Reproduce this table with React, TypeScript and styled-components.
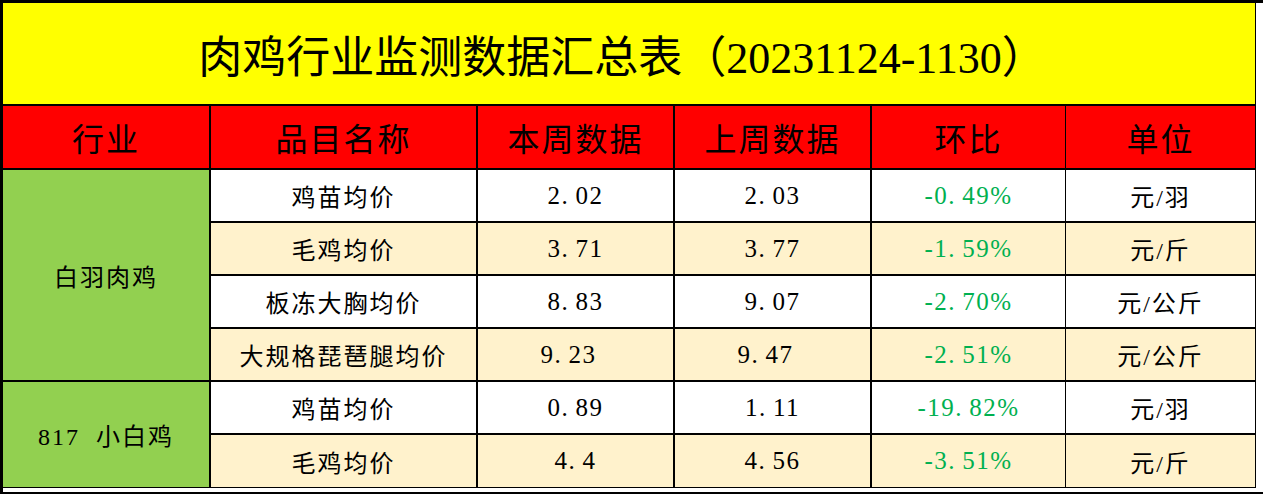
import React from 'react';
import styled, { createGlobalStyle } from 'styled-components';

const GlobalStyle = createGlobalStyle`
  html, body {
    margin: 0;
    padding: 0;
    background: #fff;
  }
  body {
    font-family: "Liberation Serif", "Noto Sans CJK SC", serif;
    color: #000;
  }
`;

const Frame = styled.div`
  box-sizing: border-box;
  width: 1263px;
  height: 494px;
  border-top: 3px solid #000;
  border-left: 3px solid #000;
  border-bottom: 2px solid #000;
  background: #fff;
`;

const Sheet = styled.div`
  display: grid;
  width: 1253px;
  box-sizing: border-box;
  grid-template-columns: 206px 265px 195px 195px 193px 188px;
  grid-template-rows: 101px 62px repeat(5, 51px) 52px;
  gap: 2px;
  padding: 0 1px 1px 0;
  background: #000;
`;

const Title = styled.div`
  grid-column: 1 / -1;
  display: flex;
  align-items: center;
  justify-content: center;
  padding-right: 14px;
  background: #ffff00;
  font-size: 44px;
  white-space: nowrap;
`;

const HeadCell = styled.div<{ $last?: boolean }>`
  display: flex;
  align-items: center;
  justify-content: center;
  margin-left: ${p => (p.$last ? '-1px' : '0')};
  background: #ff0000;
  font-size: 32px;
  letter-spacing: 2px;
`;

const GroupCell = styled.div<{ $span: number }>`
  grid-row: span ${p => p.$span};
  display: flex;
  align-items: center;
  justify-content: center;
  background: #92d050;
  font-size: 24px;
  letter-spacing: 2px;
  white-space: pre;
`;

const Cell = styled.div<{ $alt: boolean; $shift?: boolean; $green?: boolean; $last?: boolean }>`
  display: flex;
  align-items: center;
  justify-content: center;
  margin-left: ${p => (p.$last ? '-1px' : '0')};
  padding-right: ${p => (p.$shift ? '14px' : '0')};
  background: ${p => (p.$alt ? '#fff2cc' : '#ffffff')};
  color: ${p => (p.$green ? '#00b050' : '#000')};
  font-size: 24px;
  letter-spacing: 2px;
  white-space: nowrap;
`;

const Digits = styled.span`
  font-size: 25px;
  letter-spacing: 1.5px;
`;

const Dot = styled.span`
  display: inline-block;
  width: 14px;
`;

const Num: React.FC<{ value: string }> = ({ value }) => {
  const [head, tail] = value.split('.');
  if (tail === undefined) return <Digits>{value}</Digits>;
  return (
    <Digits>
      {head}
      <Dot>.</Dot>
      {tail}
    </Digits>
  );
};

interface Row {
  name: string;
  cur: string;
  prev: string;
  ratio: string;
  unit: string;
}

const groups: { label: string; rows: Row[] }[] = [
  {
    label: '白羽肉鸡',
    rows: [
      { name: '鸡苗均价', cur: '2.02', prev: '2.03', ratio: '-0.49%', unit: '元/羽' },
      { name: '毛鸡均价', cur: '3.71', prev: '3.77', ratio: '-1.59%', unit: '元/斤' },
      { name: '板冻大胸均价', cur: '8.83', prev: '9.07', ratio: '-2.70%', unit: '元/公斤' },
      { name: '大规格琵琶腿均价', cur: '9.23', prev: '9.47', ratio: '-2.51%', unit: '元/公斤' },
    ],
  },
  {
    label: '817\u00a0\u00a0小白鸡',
    rows: [
      { name: '鸡苗均价', cur: '0.89', prev: '1.11', ratio: '-19.82%', unit: '元/羽' },
      { name: '毛鸡均价', cur: '4.4', prev: '4.56', ratio: '-3.51%', unit: '元/斤' },
    ],
  },
];

const headers = ['行业', '品目名称', '本周数据', '上周数据', '环比', '单位'];

export default function App() {
  let index = 0;
  return (
    <>
      <GlobalStyle />
      <Frame>
        <Sheet>
          <Title>肉鸡行业监测数据汇总表（20231124-1130）</Title>
          {headers.map((h, i) => (
            <HeadCell key={h} $last={i === headers.length - 1}>
              {h}
            </HeadCell>
          ))}
          {groups.map(g => (
            <React.Fragment key={g.label}>
              <GroupCell $span={g.rows.length}>{g.label}</GroupCell>
              {g.rows.map(r => {
                const alt = index % 2 === 1;
                // the long-named row sits a bit off centre in the source sheet
                const shift = r.name.length > 6;
                index += 1;
                return (
                  <React.Fragment key={index}>
                    <Cell $alt={alt}>{r.name}</Cell>
                    <Cell $alt={alt} $shift={shift}>
                      <Num value={r.cur} />
                    </Cell>
                    <Cell $alt={alt} $shift={shift}>
                      <Num value={r.prev} />
                    </Cell>
                    <Cell $alt={alt} $green>
                      <Num value={r.ratio} />
                    </Cell>
                    <Cell $alt={alt} $last>
                      {r.unit}
                    </Cell>
                  </React.Fragment>
                );
              })}
            </React.Fragment>
          ))}
        </Sheet>
      </Frame>
    </>
  );
}
